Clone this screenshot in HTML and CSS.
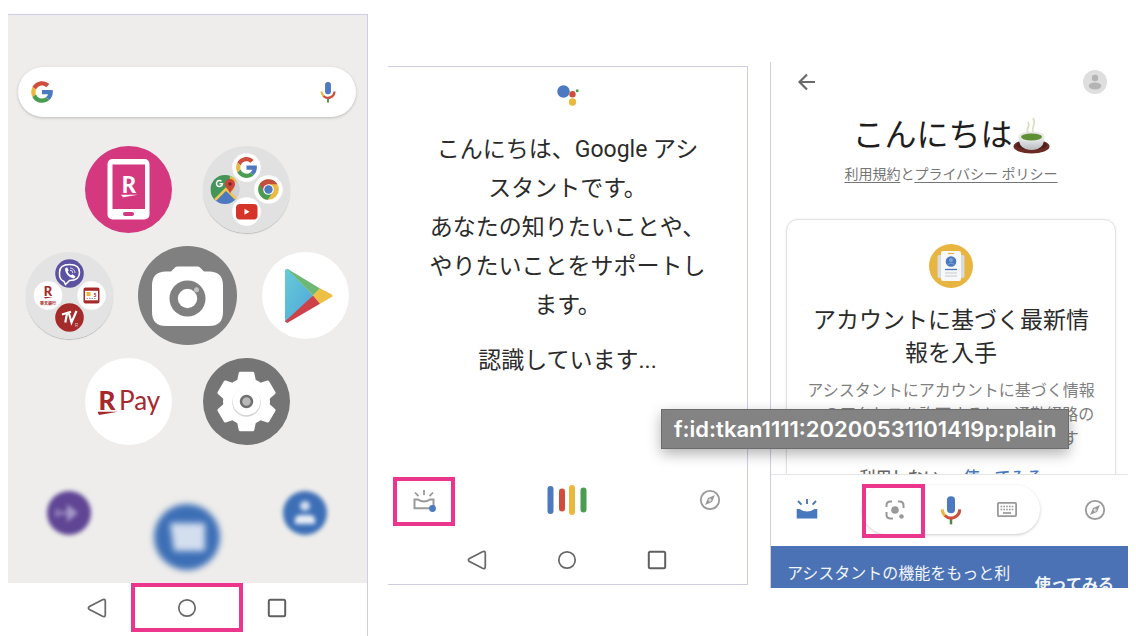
FILE: index.html
```html
<!DOCTYPE html>
<html lang="ja">
<head>
<meta charset="utf-8">
<meta name="viewport" content="width=device-width, initial-scale=1">
<title>Google アシスタント</title>
<link rel="stylesheet" href="styles.css">
</head>
<body>
<svg class="defs" aria-hidden="true">
  <symbol id="g" viewBox="0 0 48 48">
    <path fill="#4c79c0" d="M43.611 20.083H24v8h11.303a12.04 12.04 0 0 1-4.087 5.571l6.19 5.238C36.971 39.205 44 34 44 24c0-1.341-.138-2.65-.389-3.917z"/>
    <path fill="#cf4d3c" d="M6.306 14.691l6.571 4.819C14.655 15.108 18.961 12 24 12c3.059 0 5.842 1.154 7.961 3.039l5.657-5.657C34.046 6.053 29.268 4 24 4 16.318 4 9.656 8.337 6.306 14.691z"/>
    <path fill="#4b9c53" d="M24 44c5.166 0 9.86-1.977 13.409-5.192l-6.19-5.238A11.91 11.91 0 0 1 24 36c-5.202 0-9.619-3.317-11.283-7.946l-6.522 5.025C9.505 39.556 16.227 44 24 44z"/>
    <path fill="#e9b93f" d="M6.306 14.691A19.9 19.9 0 0 0 4 24c0 3.27.79 6.36 2.195 9.079l6.522-5.025a12 12 0 0 1 .16-8.544z"/>
  </symbol>
  <symbol id="mic" viewBox="0 0 24 24">
    <rect x="8.800" y="1" width="6.400" height="13.500" rx="3" fill="#4c79c0"/>
    <path d="M12 18v5.500" stroke="#4b8c43" stroke-width="2"/>
    <path d="M5 11.500a7 7 0 0 0 2.200 5" fill="none" stroke="#e9b93f" stroke-width="2.400"/>
    <path d="M7.100 16.400A7 7 0 0 0 19 11.500" fill="none" stroke="#cf4d3c" stroke-width="2.400"/>
  </symbol>
  <symbol id="back" viewBox="0 0 24 24">
    <path d="M17.500 3.800Q20.300 2.500 20.300 5.500V18.500Q20.300 21.500 17.500 20.200L4.500 13.500Q2.300 12 4.500 10.500z" fill="none" stroke="#666" stroke-width="1.700"/>
  </symbol>
  <symbol id="home" viewBox="0 0 24 24">
    <circle cx="12" cy="12" r="8.200" fill="none" stroke="#666" stroke-width="1.700"/>
  </symbol>
  <symbol id="recent" viewBox="0 0 24 24">
    <rect x="3.800" y="3.800" width="16.400" height="16.400" rx="1.500" fill="none" stroke="#606060" stroke-width="2"/>
  </symbol>
  <symbol id="compass" viewBox="0 0 24 24">
    <circle cx="12" cy="12" r="9.200" fill="none" stroke="#999" stroke-width="1.800"/>
    <path fill="#999" fill-rule="evenodd" d="M17 7l-3 7-7 3 3-7zM12 10.500a1.500 1.500 0 1 0 0 3 1.500 1.500 0 0 0 0-3z"/>
    <circle cx="12" cy="12" r=".7" fill="#999"/>
  </symbol>
</svg>

<main class="stage">
  <section class="phone launcher" aria-label="ホーム画面">
    <div class="wallpaper">
      <form class="search">
        <svg class="search-logo" aria-hidden="true"><use href="#g"/></svg>
        <input class="search-input" type="text" aria-label="検索">
        <button class="plain" type="button" aria-label="音声検索"><svg class="search-mic"><use href="#mic"/></svg></button>
      </form>

      <div class="apps">
        <div class="app-row">
          <button class="app plain" aria-label="my 楽天モバイル">
            <svg viewBox="0 0 87 87">
              <circle cx="43.500" cy="43.500" r="43.500" fill="#d4397f"/>
              <rect x="22.500" y="13" width="42" height="60.500" rx="5" fill="#fff"/>
              <rect x="27.500" y="18.500" width="32.500" height="44.500" fill="#d4397f"/>
              <rect x="38" y="66" width="11" height="4" rx="2" fill="#d4397f"/>
              <text class="logo-r" x="44" y="47" font-size="22" fill="#fff">R</text>
              <path d="M36 48.800H53L38 51.300z" fill="#fff"/>
            </svg>
          </button>
          <button class="app plain folder" aria-label="Google フォルダ">
            <svg viewBox="0 0 87 87">
              <circle cx="43.500" cy="43.500" r="43.500" fill="#e1e1e1"/>
              <circle cx="43.500" cy="21.500" r="14.300" fill="#fff"/>
              <use href="#g" x="31" y="9" width="25" height="25"/>
              <circle cx="22" cy="43.500" r="14.500" fill="#ccc"/>
              <clipPath id="mapclip"><circle cx="22" cy="43.500" r="14.500"/></clipPath>
              <g clip-path="url(#mapclip)">
                <path d="M7 28H32L30 37 8 58z" fill="#43955a"/>
                <path d="M27 28h7v13l-8 6z" fill="#e9bd45"/>
                <path d="M31 35l8 5v14l-8-7z" fill="#d0d0d0"/>
                <path d="M23 43l14 14-16 4-12-6z" fill="#4c79c0"/>
                <path d="M9 57L23 43l14 14" fill="none" stroke="#f0c84f" stroke-width="2.500"/>
              </g>
              <path d="M18.500 35.300a3 3 0 1 0 1 2.400h-3" fill="none" stroke="#fff" stroke-width="1.500"/>
              <path d="M27 48c-.5-4-5-6-5-10a5 5 0 0 1 10 0c0 4-4 6-5 10z" fill="#cb4639"/>
              <circle cx="27" cy="38" r="1.800" fill="#7c2522"/>
              <circle cx="65.500" cy="43.500" r="14.300" fill="#fff"/>
              <circle cx="65.500" cy="43.500" r="10.300" fill="#e9bd45"/>
              <path d="M56.600 38.300A10.300 10.300 0 0 0 64.700 53.800L70 46.100 65.500 43.500z" fill="#4b9c53"/>
              <path d="M56.600 38.300A10.300 10.300 0 0 1 74.400 38.300H65.500L61 46z" fill="#c24f3d"/>
              <circle cx="65.500" cy="43.500" r="5.300" fill="#fff"/>
              <circle cx="65.500" cy="43.500" r="4.200" fill="#4c79c0"/>
              <circle cx="43.500" cy="65.500" r="14.300" fill="#fff"/>
              <rect x="33" y="58" width="21.500" height="15.500" rx="4" fill="#d63428"/>
              <path d="M41.500 62.800v6l5-3z" fill="#fff"/>
            </svg>
          </button>
        </div>

        <div class="app-row">
          <button class="app plain folder" aria-label="楽天フォルダ">
            <svg viewBox="0 0 87 87">
              <circle cx="43.500" cy="43.500" r="43.500" fill="#e3e3e3"/>
              <circle cx="43.500" cy="21.500" r="14.300" fill="#5c52a2"/>
              <path d="M38 29.500c-4.500-2-4.500-5-4.500-9s2-8 10-8 10 4 10 8-2 8-10 8l-4 4z" fill="none" stroke="#fff" stroke-width="1.500"/>
              <path d="M39 16.500c0 5 4 9 9 10l1.500-2-3-2.200-1.500 1c-1.800-.8-2.800-2-3.300-3.800l1-1.200-1.700-3z" fill="#fff"/>
              <path d="M44 16a5 5 0 0 1 5 5M44 18.300a2.500 2.500 0 0 1 2.700 2.700" fill="none" stroke="#fff" stroke-width=".8"/>
              <circle cx="22" cy="43.500" r="14.300" fill="#fff"/>
              <text class="logo-r" x="22" y="44" font-size="13" fill="#a52a2a">R</text>
              <path d="M18 45h9l-8 1.500z" fill="#a52a2a"/>
              <text class="logo-jp" x="22" y="52.500" font-size="4" fill="#a52a2a">楽天銀行</text>
              <circle cx="65.500" cy="43.500" r="14.300" fill="#fff"/>
              <rect x="57.500" y="35.500" width="16" height="16" rx="2" fill="#a52a2a"/>
              <rect x="59" y="38.800" width="13" height="9.500" fill="#fff"/>
              <rect x="60.500" y="40" width="4" height="4" fill="#e5b93f"/>
              <text class="logo-r" x="69" y="44.500" font-size="5" fill="#a52a2a">5</text>
              <path d="M60.500 46.500h10" stroke="#999" stroke-width="1" stroke-dasharray="1.500 1"/>
              <circle cx="43.500" cy="65.500" r="14.300" fill="#a52a2a"/>
              <path d="M36 62.500l9-2.800M41 61.500l-1.700 9M43 61.500l2.500 9 5-11.500" fill="none" stroke="#fff" stroke-width="2.200"/>
              <text x="48.800" y="75" font-family="Liberation Sans, sans-serif" font-size="5" fill="#e8b5b5">R</text>
            </svg>
          </button>
          <button class="app app-large plain" aria-label="カメラ">
            <svg viewBox="0 0 99 99">
              <circle cx="49.500" cy="49.500" r="49.500" fill="#808080"/>
              <path d="M28 25.500h5l4-4q1-1 2.500-1h20q1.500 0 2.500 1l4 4h5q14 0 14 14V66q0 14-14 14H28q-14 0-14-14V39.500q0-14 14-14z" fill="#fff"/>
              <circle cx="49.500" cy="52.500" r="18" fill="#808080"/>
              <circle cx="49.500" cy="52.500" r="9.700" fill="#fff"/>
              <circle cx="58.500" cy="43.700" r="2.500" fill="#c4c4c4"/>
            </svg>
          </button>
          <button class="app plain" aria-label="Play ストア">
            <svg viewBox="0 0 87 87">
              <defs><linearGradient id="sky" x2="1" y2="1"><stop stop-color="#66cbd6"/><stop offset="1" stop-color="#4fa5dc"/></linearGradient></defs>
              <circle cx="43.500" cy="43.500" r="43.500" fill="#fff"/>
              <path d="M23 19q0-2.500 3-2l25 26.500-25 27q-3 0-3-2z" fill="url(#sky)"/>
              <path d="M25 16.500l33 20-7 7z" fill="#6db875"/>
              <path d="M58 36.300l11 5.700q3 1.800 0 3.500l-11 6.300-7-8.300z" fill="#ecc044"/>
              <path d="M51 43.500l7 8.300-32 18.700q-2 .5-3-1z" fill="#ce4149"/>
            </svg>
          </button>
        </div>

        <div class="app-row">
          <button class="app plain" aria-label="楽天ペイ">
            <svg viewBox="0 0 87 87">
              <circle cx="43.500" cy="43.500" r="43.500" fill="#fff"/>
              <text class="logo-r" x="22" y="52" font-size="26" fill="#a5282c">R</text>
              <path d="M12.500 53.800H33L14 57z" fill="#a5282c"/>
              <text class="logo-pay" x="34" y="52" font-size="26" fill="#a5282c">Pay</text>
            </svg>
          </button>
          <button class="app plain" aria-label="設定">
            <svg viewBox="0 0 87 87">
              <defs><path id="tooth" d="M-9.500-20l1.700-8.500q.3-1.200 1.500-1.200H6.300q1.200 0 1.500 1.200L9.500-20z" fill="#fff"/></defs>
              <circle cx="43.500" cy="43.500" r="43.500" fill="#757575"/>
              <g transform="translate(43.500 43.500)">
                <circle r="23.500" fill="#fff"/>
                <use href="#tooth"/><use href="#tooth" transform="rotate(60)"/><use href="#tooth" transform="rotate(120)"/>
                <use href="#tooth" transform="rotate(180)"/><use href="#tooth" transform="rotate(240)"/><use href="#tooth" transform="rotate(300)"/>
                <circle cy="1" r="14.200" fill="#d2d2d2"/>
                <circle r="13.700" fill="#fff"/>
                <circle r="5.500" fill="#b8b8b8" stroke="#6f6f6f" stroke-width="2.500"/>
              </g>
            </svg>
          </button>
        </div>
      </div>

      <div class="dock">
        <button class="dock-app plain" aria-label="アプリ">
          <svg viewBox="0 0 44 44"><circle cx="22" cy="22" r="22" fill="#5f4594"/><path d="M10 18v8M10 22h11" stroke="#8f7cba" stroke-width="4"/><path d="M20 13l11 9-11 9z" fill="#a597c8"/></svg>
        </button>
        <button class="dock-app dock-large plain" aria-label="メッセージ">
          <svg viewBox="0 0 66 66"><circle cx="33" cy="33" r="33" fill="#3d6fb6"/><path d="M16 19h35v28H20z" fill="#d3deef"/></svg>
        </button>
        <button class="dock-app plain" aria-label="連絡先">
          <svg viewBox="0 0 44 44"><circle cx="22" cy="22" r="22" fill="#3d6fb6"/><circle cx="22" cy="15" r="5" fill="#d3deef"/><path d="M12 33v-4q0-5 6-5h8q6 0 6 5v4z" fill="#e8edf6"/></svg>
        </button>
      </div>
    </div>
    <nav class="sysnav" aria-label="システム">
      <button class="plain" aria-label="戻る"><svg><use href="#back"/></svg></button>
      <button class="plain marked" aria-label="ホーム"><svg><use href="#home"/></svg></button>
      <button class="plain" aria-label="履歴"><svg><use href="#recent"/></svg></button>
    </nav>
  </section>

  <section class="phone assistant" aria-label="アシスタント">
    <svg class="assistant-logo" viewBox="0 0 22 22" aria-hidden="true">
      <circle cx="6.500" cy="6.500" r="6.200" fill="#4c79c0"/><circle cx="15.500" cy="9.200" r="3.200" fill="#cf4d3c"/>
      <circle cx="15.500" cy="17" r="3.700" fill="#e9b93f"/><circle cx="20.200" cy="5.800" r="1.500" fill="#4b9c53"/>
    </svg>
    <p class="greeting">こんにちは、Google アシスタントです。<br>あなたの知りたいことや、やりたいことをサポートします。</p>
    <p class="status">認識しています...</p>
    <div class="toolbar">
      <button class="plain marked" aria-label="スナップショット">
        <svg viewBox="0 0 24 24">
          <path d="M2.500 11.500H6q6 4 12 0h3.500v8.700h-19z" fill="none" stroke="#999" stroke-width="2"/>
          <path d="M12 2v5M3 4.500l3.500 3.700M21 4.500l-3.500 3.700" stroke="#999" stroke-width="1.800"/>
          <circle cx="20.500" cy="20.500" r="3.400" fill="#4c79c0"/>
        </svg>
      </button>
      <svg class="bars" viewBox="0 0 40 32" role="img" aria-label="聞き取り中">
        <g stroke-width="6" stroke-linecap="round">
          <path d="M3.500 5v22" stroke="#4c79c0"/><path d="M15 7.500v17" stroke="#cf4d3c"/>
          <path d="M25 4v24" stroke="#e9b93f"/><path d="M36.500 6.500v19" stroke="#4b9c53"/>
        </g>
      </svg>
      <button class="plain" aria-label="探索"><svg><use href="#compass"/></svg></button>
    </div>
    <nav class="sysnav" aria-label="システム">
      <button class="plain" aria-label="戻る"><svg><use href="#back"/></svg></button>
      <button class="plain" aria-label="ホーム"><svg><use href="#home"/></svg></button>
      <button class="plain" aria-label="履歴"><svg><use href="#recent"/></svg></button>
    </nav>
  </section>

  <section class="phone snapshot" aria-label="スナップショット">
    <div class="scroller">
      <header class="topbar">
        <button class="plain" aria-label="戻る"><svg viewBox="0 0 24 24"><path d="M20 12H5M12 4.500L4.500 12l7.500 7.500" fill="none" stroke="#6a6a6a" stroke-width="2.200"/></svg></button>
        <button class="plain" aria-label="アカウント"><svg viewBox="0 0 24 24"><circle cx="12" cy="12" r="12" fill="#dedede"/><circle cx="12" cy="8" r="3.200" fill="#b4b4b4"/><ellipse cx="12" cy="16" rx="6.300" ry="3.400" fill="#b4b4b4"/></svg></button>
      </header>
      <h1 class="hello">こんにちは<svg viewBox="0 0 37 37" role="img" aria-label="湯のみ">
        <defs><linearGradient id="cup" x2="0" y2="1"><stop stop-color="#f2f2f2"/><stop offset="1" stop-color="#b8bcc0"/></linearGradient></defs>
        <ellipse cx="18.500" cy="29.500" rx="18" ry="7" fill="#6b2b25"/>
        <ellipse cx="18.500" cy="28" rx="15" ry="5" fill="#50201c"/>
        <path d="M5.500 19.500q0 10 7 12.500 6 2 12 0 7-2.500 7-12.500z" fill="url(#cup)"/>
        <ellipse cx="18.500" cy="19.500" rx="13" ry="5" fill="#e6e8e7"/>
        <ellipse cx="18.500" cy="20" rx="10.500" ry="3.400" fill="#5f8f34"/>
        <path d="M15 16c-3-5 3-6 0-11M20 15c-2-6 4-7 0-14" fill="none" stroke="#dcdfc2" stroke-width="1.800"/>
      </svg></h1>
      <p class="legal"><a href="#terms">利用規約</a>と<a href="#privacy">プライバシー ポリシー</a></p>
      <article class="card">
        <svg class="card-icon" viewBox="0 0 44 44" aria-hidden="true">
          <circle cx="22" cy="22" r="22" fill="#e8b540"/>
          <rect x="8.500" y="11" width="27" height="23" rx="2" fill="#d9dcdf"/>
          <rect x="12" y="7" width="20" height="30" rx="2" fill="#f7f8fa"/>
          <path d="M19 9.500h6" stroke="#e8b540" stroke-width="1.200"/>
          <circle cx="22" cy="17.500" r="5.300" fill="#4878bd"/><circle cx="22" cy="16" r="2" fill="#7fa3d8"/><path d="M18.500 20.500q3.500-3 7 0" stroke="#7fa3d8" fill="none"/>
          <path d="M16 25.500h12" stroke="#4878bd" stroke-width="1.300"/><path d="M16 29h12M16 32h12" stroke="#c6c9cc"/>
        </svg>
        <h2 class="card-title">アカウントに基づく最新情報を入手</h2>
        <p class="card-text">アシスタントにアカウントに基づく情報へのアクセスを許可すると、通勤経路の確認などをアシスタントが行います</p>
        <div class="card-actions">
          <button class="plain">利用しない</button>
          <button class="plain accent">使ってみる</button>
        </div>
      </article>
    </div>
    <div class="inputbar">
      <button class="plain" aria-label="スナップショット">
        <svg viewBox="0 0 24 24">
          <path d="M1.700 11H4.500q7.500 5 15 0h2.800v9.500H1.700z" fill="#4878bd"/>
          <path d="M12 1v5M3 3l3.500 3.700M21 3l-3.500 3.700" stroke="#4878bd" stroke-width="1.900"/>
        </svg>
      </button>
      <div class="pill">
        <button class="plain marked" aria-label="レンズ">
          <svg viewBox="0 0 24 24">
            <path d="M3.500 9V7.500q0-4 4-4H9M15 3.500h1.500q4 0 4 4V10M3.500 14v2.500q0 4 4 4H10" fill="none" stroke="#999" stroke-width="2"/>
            <circle cx="12" cy="12" r="3.800" fill="#999"/><circle cx="18.500" cy="18.500" r="2.300" fill="#999"/>
          </svg>
        </button>
        <button class="plain" aria-label="音声入力"><svg class="pill-mic"><use href="#mic"/></svg></button>
        <button class="plain" aria-label="キーボード">
          <svg viewBox="0 0 24 24">
            <rect x="2.900" y="4.900" width="18.200" height="13.200" rx="1" fill="none" stroke="#999" stroke-width="1.800"/>
            <path d="M5.500 8.500h13M5.500 11.500h13" stroke="#999" stroke-width="1.700" stroke-dasharray="1.700 1.100"/><path d="M8 15h8" stroke="#999" stroke-width="1.700"/>
          </svg>
        </button>
      </div>
      <button class="plain" aria-label="探索"><svg><use href="#compass"/></svg></button>
    </div>
    <aside class="banner">
      <p>アシスタントの機能をもっと利</p>
      <button class="plain">使ってみる</button>
    </aside>
  </section>

  <div class="tooltip" role="tooltip">f:id:tkan1111:20200531101419p:plain</div>
</main>
</body>
</html>
```
FILE: styles.css
```css
* { box-sizing: border-box; }

body {
  margin: 0;
  background: #fff;
  color: #2b2b2b;
  font-family: Roboto, "Noto Sans CJK JP", sans-serif;
}

h1, h2, p { margin: 0; font-weight: 400; }
svg { display: block; }
.defs { position: absolute; width: 0; height: 0; }

.plain {
  display: grid;
  place-items: center;
  padding: 0;
  border: 0;
  background: none;
  color: inherit;
  font: inherit;
}

.stage {
  position: relative;
  display: grid;
  grid-template-columns: repeat(3, minmax(0, 1fr));
  gap: 20px;
  align-items: start;
  min-height: 100vh;
  padding: 0 8px;
}

.phone {
  display: flex;
  flex-direction: column;
  border: 0 solid #cfcde2;
}

.marked { position: relative; }
.marked::after {
  content: "";
  position: absolute;
  border: 4px solid #ec368d;
}

/* Home screen */
.launcher {
  align-self: stretch;
  margin-top: 14px;
  border-width: 1px 1px 0 0;
}
.wallpaper {
  flex: 1;
  padding: 52px 11px 11px 10px;
  background: #eeedeb;
}
.search {
  display: flex;
  align-items: center;
  height: 50px;
  padding: 0 17px 0 11px;
  border-radius: 25px;
  background: #fff;
  box-shadow: 0 1px 3px #bbb;
}
.search-logo { width: 26px; height: 26px; }
.search-input {
  flex: 1;
  min-width: 0;
  height: 32px;
  border: 0;
  background: none;
}
.search-mic { width: 22px; height: 22px; }

.apps {
  display: grid;
  gap: 13px;
  margin-top: 29px;
}
.app-row {
  display: flex;
  justify-content: center;
  align-items: center;
  gap: 31px;
}
.app-row:nth-child(2) { gap: 25px; }
.app { width: 87px; }
.app-large { width: 99px; }
.app svg { width: 100%; }
.folder { border-radius: 50%; box-shadow: 0 1px 1px #bbb; }
.logo-r { font-family: Lato, sans-serif; font-weight: 900; text-anchor: middle; }
.logo-jp { font-family: "Noto Sans CJK JP", sans-serif; font-weight: 700; text-anchor: middle; }
.logo-pay { font-family: Lato, sans-serif; }

.dock {
  display: flex;
  justify-content: center;
  align-items: flex-start;
  gap: 63px;
  margin-top: 46px;
}
.dock-app { width: 44px; filter: blur(2px); }
.dock-large { width: 66px; margin: 13px 0 0; filter: blur(3px); }
.dock-app svg { width: 100%; }

.sysnav {
  display: flex;
  justify-content: center;
  padding: 0 2px 4px 0;
}
.sysnav button { width: 90px; height: 49px; }
.sysnav svg { width: 24px; height: 24px; }
.sysnav .marked::after { inset: 0 -11px; }

/* Listening screen */
.assistant {
  align-items: center;
  margin-top: 66px;
  padding-top: 18px;
  border-width: 1px 1px 1px 0;
}
.assistant-logo { width: 22px; height: 22px; }
.greeting, .status {
  max-width: 280px;
  font-size: 23px;
  line-height: 39px;
  text-align: center;
}
.greeting { margin-top: 23px; }
.status { margin-top: 16px; }
.toolbar {
  display: flex;
  justify-content: space-between;
  align-items: center;
  align-self: stretch;
  height: 56px;
  margin-top: 92px;
  padding: 0 25px 0 24px;
}
.toolbar svg { width: 24px; height: 24px; }
.toolbar .bars { width: 40px; height: 32px; }
.toolbar .marked::after { inset: -11px -19px -14px; }
.assistant .sysnav { margin-top: 7px; padding-bottom: 0; }

/* Snapshot screen */
.snapshot {
  margin: 62px 0 0 2px;
  border-width: 0 0 0 1px;
}
.scroller {
  max-height: 412px;
  padding: 0 12px 0 15px;
  overflow: hidden;
}
.topbar {
  display: flex;
  justify-content: space-between;
  align-items: center;
  height: 40px;
  padding: 0 9px;
}
.topbar svg { width: 24px; height: 24px; }
.hello {
  display: flex;
  justify-content: center;
  align-items: center;
  margin-top: 9px;
  font-size: 32px;
  line-height: 48px;
  color: #1e1e1e;
}
.hello svg { width: 37px; height: 37px; }
.legal {
  margin-top: 5px;
  font-size: 14px;
  line-height: 20px;
  text-align: center;
  color: #757575;
}
.legal a { color: inherit; text-underline-offset: 3px; }
.card {
  display: flex;
  flex-direction: column;
  align-items: center;
  margin-top: 35px;
  padding: 24px 20px;
  border: 1px solid #e2e2e2;
  border-radius: 12px;
  box-shadow: 0 0 2px #e2e2e2;
  text-align: center;
}
.card-icon { width: 44px; height: 44px; }
.card-title {
  margin-top: 16px;
  font-size: 23px;
  line-height: 33px;
}
.card-text {
  width: 288px;
  margin-top: 9px;
  font-size: 16px;
  line-height: 24px;
  color: #808080;
}
.card-actions {
  display: flex;
  gap: 24px;
  margin-top: 11px;
  font-size: 16px;
  font-weight: 500;
  line-height: 32px;
  color: #666;
}
.accent { color: #4878bd; }

.inputbar {
  display: flex;
  justify-content: space-between;
  align-items: center;
  height: 72px;
  padding: 0 21px 2px 24px;
  border-top: 1px solid #e4e4e4;
}
.inputbar svg { width: 24px; height: 24px; }
.pill {
  display: flex;
  align-items: center;
  gap: 29px;
  height: 49px;
  padding: 0 21px;
  border-radius: 25px;
  box-shadow: 0 1px 3px #ccc;
}
.pill .pill-mic { width: 30px; height: 30px; }
.pill .marked::after { inset: -14px -18px -16px -21px; }

.banner {
  display: flex;
  justify-content: space-between;
  max-height: 42px;
  padding: 12px 14px 0 16px;
  overflow: hidden;
  background: #4a72b4;
  color: #f2f5fa;
  font-size: 16px;
  line-height: 32px;
}
.banner button { margin-top: 11px; font-weight: 700; }

.tooltip {
  position: absolute;
  top: 409px;
  left: 661px;
  padding: 0 12px;
  border: 1px solid #6c6c6c;
  background: #838383;
  box-shadow: 0 5px 14px rgba(0, 0, 0, .3);
  color: #fff;
  font-family: Inter, sans-serif;
  font-size: 22px;
  font-weight: 600;
  line-height: 38px;
  white-space: nowrap;
}
```
